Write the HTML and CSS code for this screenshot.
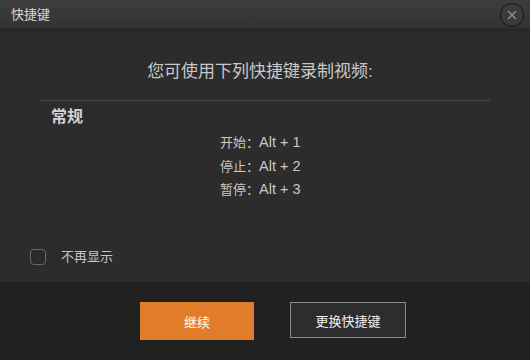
FILE: index.html
```html
<!DOCTYPE html>
<html lang="zh-CN">
<head>
<meta charset="utf-8">
<title>快捷键</title>
<link rel="stylesheet" href="styles.css">
</head>
<body>
<div class="dialog">
  <div class="titlebar">
    <span class="title">快捷键</span>
    <button class="close" aria-label="关闭">
      <svg width="10" height="10" viewBox="0 0 10 10"><path d="M1 1 L9 9 M9 1 L1 9" stroke="#9a9a9a" stroke-width="1.2" fill="none"/></svg>
    </button>
  </div>
  <div class="content">
    <div class="subtitle">您可使用下列快捷键录制视频:</div>
    <div class="divider"></div>
    <div class="section-title">常规</div>
    <ul class="shortcuts">
      <li>开始：<span class="key">Alt + 1</span></li>
      <li>停止：<span class="key">Alt + 2</span></li>
      <li>暂停：<span class="key">Alt + 3</span></li>
    </ul>
    <label class="dontshow">
      <span class="checkbox"></span>
      <span class="label-text">不再显示</span>
    </label>
  </div>
  <div class="footer">
    <button class="btn btn-primary">继续</button>
    <button class="btn btn-outline">更换快捷键</button>
  </div>
</div>
</body>
</html>
```

FILE: styles.css
```css
* { box-sizing: border-box; }
html, body {
  margin: 0;
  padding: 0;
  width: 530px;
  height: 360px;
  background: #2c2c2c;
  font-family: "Liberation Sans", "Noto Sans CJK SC", sans-serif;
  overflow: hidden;
}
.dialog {
  width: 530px;
  height: 360px;
  display: flex;
  flex-direction: column;
}
.titlebar {
  height: 31px;
  flex: none;
  display: flex;
  align-items: center;
  padding-left: 11px;
  padding-right: 6px;
  background: linear-gradient(#3d3d3d, #333333 90%, #262626);
  border-bottom: 1px solid #242424;
}
.title {
  color: #d6d6d6;
  font-size: 13px;
  line-height: 16px;
}
.close {
  margin-left: auto;
  width: 24px;
  height: 24px;
  border-radius: 50%;
  border: 1.5px solid #141414;
  background: #3b3b3b;
  padding: 0;
  display: flex;
  align-items: center;
  justify-content: center;
}
.close svg { display: block; }
.content {
  flex: 1;
  display: flex;
  flex-direction: column;
  background: #2c2c2c;
}
.subtitle {
  padding-top: 29px;
  padding-right: 10px;
  text-align: center;
  color: #c8c8c8;
  font-size: 17px;
  line-height: 23px;
}
.divider {
  margin: 17px 40px 0 40px;
  border-top: 1px solid #4a4a4a;
}
.section-title {
  margin-top: 6px;
  padding-left: 51px;
  color: #d2d2d2;
  font-size: 16px;
  font-weight: bold;
  line-height: 20px;
}
.shortcuts {
  list-style: none;
  margin: 4px 0 0 0;
  padding: 0 0 0 220px;
  color: #c8c8c8;
  font-size: 13px;
  line-height: 22.5px;
}
.key {
  font-size: 14.5px;
}
.dontshow {
  margin-top: auto;
  margin-bottom: 16px;
  padding-left: 30px;
  display: flex;
  align-items: center;
  gap: 15px;
}
.checkbox {
  width: 16px;
  height: 16px;
  border: 1.5px solid #6a6a6a;
  border-radius: 4px;
  background: #2a2a2a;
}
.label-text {
  color: #c4c4c4;
  font-size: 13px;
  line-height: 18px;
}
.footer {
  height: 78px;
  flex: none;
  background: #212121;
  display: flex;
  align-items: flex-start;
  padding-top: 20px;
  padding-left: 140px;
  gap: 36px;
}
.btn {
  font-family: "Liberation Sans", "Noto Sans CJK SC", sans-serif;
  font-size: 13px;
  padding: 0;
  cursor: pointer;
}
.btn-primary {
  width: 114px;
  height: 38px;
  border: none;
  background: #e07c2a;
  color: #ffffff;
}
.btn-outline {
  width: 116px;
  height: 36px;
  border: 1px solid #8a8a8a;
  background: #2d2d2d;
  color: #f0f0f0;
}
```
